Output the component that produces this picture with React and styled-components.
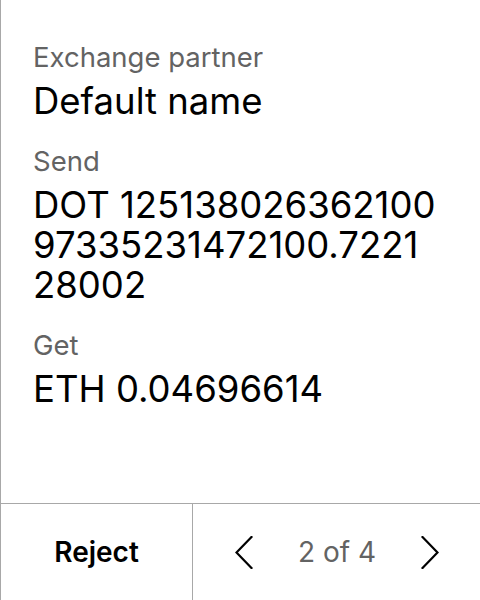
import React from 'react'
import styled, { createGlobalStyle } from 'styled-components'

const GlobalStyle = createGlobalStyle`
    html, body {
        margin: 0;
        padding: 0;
        background: #ffffff;
    }
    body {
        font-family: Inter, "Noto Sans", sans-serif;
        color: #000000;
    }
`

const details = [
    { label: 'Exchange partner', value: 'Default name' },
    { label: 'Send', value: 'DOT 12513802636210097335231472100.722128002' },
    { label: 'Get', value: 'ETH 0.04696614' },
]

const Chevron = ({ dir }) => (
    <svg width="18" height="33" viewBox="0 0 18 33" fill="none">
        <polyline
            points={dir === 'left' ? '16.5,1 1.5,16.5 16.5,32' : '1.5,1 16.5,16.5 1.5,32'}
            stroke="#000"
            strokeWidth="2.2"
            strokeLinecap="square"
            strokeLinejoin="miter"
        />
    </svg>
)

const App = () => {
    return (
        <>
            <GlobalStyle />
            <Container>
                <Content>
                    {details.map(item => (
                        <Section key={item.label}>
                            <Label>{item.label}</Label>
                            <Value>{item.value}</Value>
                        </Section>
                    ))}
                </Content>
                <Footer>
                    <RejectButton>Reject</RejectButton>
                    <Pager>
                        <NavButton aria-label="Previous">
                            <Chevron dir="left" />
                        </NavButton>
                        <PageCount>2 of 4</PageCount>
                        <NavButton aria-label="Next">
                            <Chevron dir="right" />
                        </NavButton>
                    </Pager>
                </Footer>
            </Container>
        </>
    )
}

export default App

const Container = styled.div`
    height: 600px;
    width: 480px;
    box-sizing: border-box;
    border-left: 1px solid #a8a8a8;
    display: flex;
    flex-direction: column;
`

const Content = styled.div`
    flex: 1;
    display: flex;
    flex-direction: column;
    gap: 24px;
    padding: 41px 32px 0 32px;
`

const Section = styled.div`
    display: flex;
    flex-direction: column;
    gap: 8px;
`

const Label = styled.div`
    font-size: 27.5px;
    line-height: 32px;
    color: #636363;
`

const Value = styled.div`
    font-size: 36.5px;
    line-height: 40px;
    color: #000;
    word-break: break-all;
    padding-right: 12px;
`

const Footer = styled.div`
    height: 96px;
    border-top: 1px solid #a8a8a8;
    display: flex;
`

const RejectButton = styled.button`
    width: 192px;
    border: none;
    border-right: 1px solid #a8a8a8;
    background: transparent;
    font-family: Inter, "Noto Sans", sans-serif;
    font-size: 28px;
    font-weight: 600;
    color: #000;
    padding: 0;
`

const Pager = styled.div`
    flex: 1;
    display: flex;
    align-items: center;
    justify-content: space-between;
    padding: 0 41px 0 42px;
`

const NavButton = styled.button`
    border: none;
    background: transparent;
    padding: 0;
    display: flex;
    align-items: center;
`

const PageCount = styled.span`
    font-size: 28px;
    color: #636363;
`
